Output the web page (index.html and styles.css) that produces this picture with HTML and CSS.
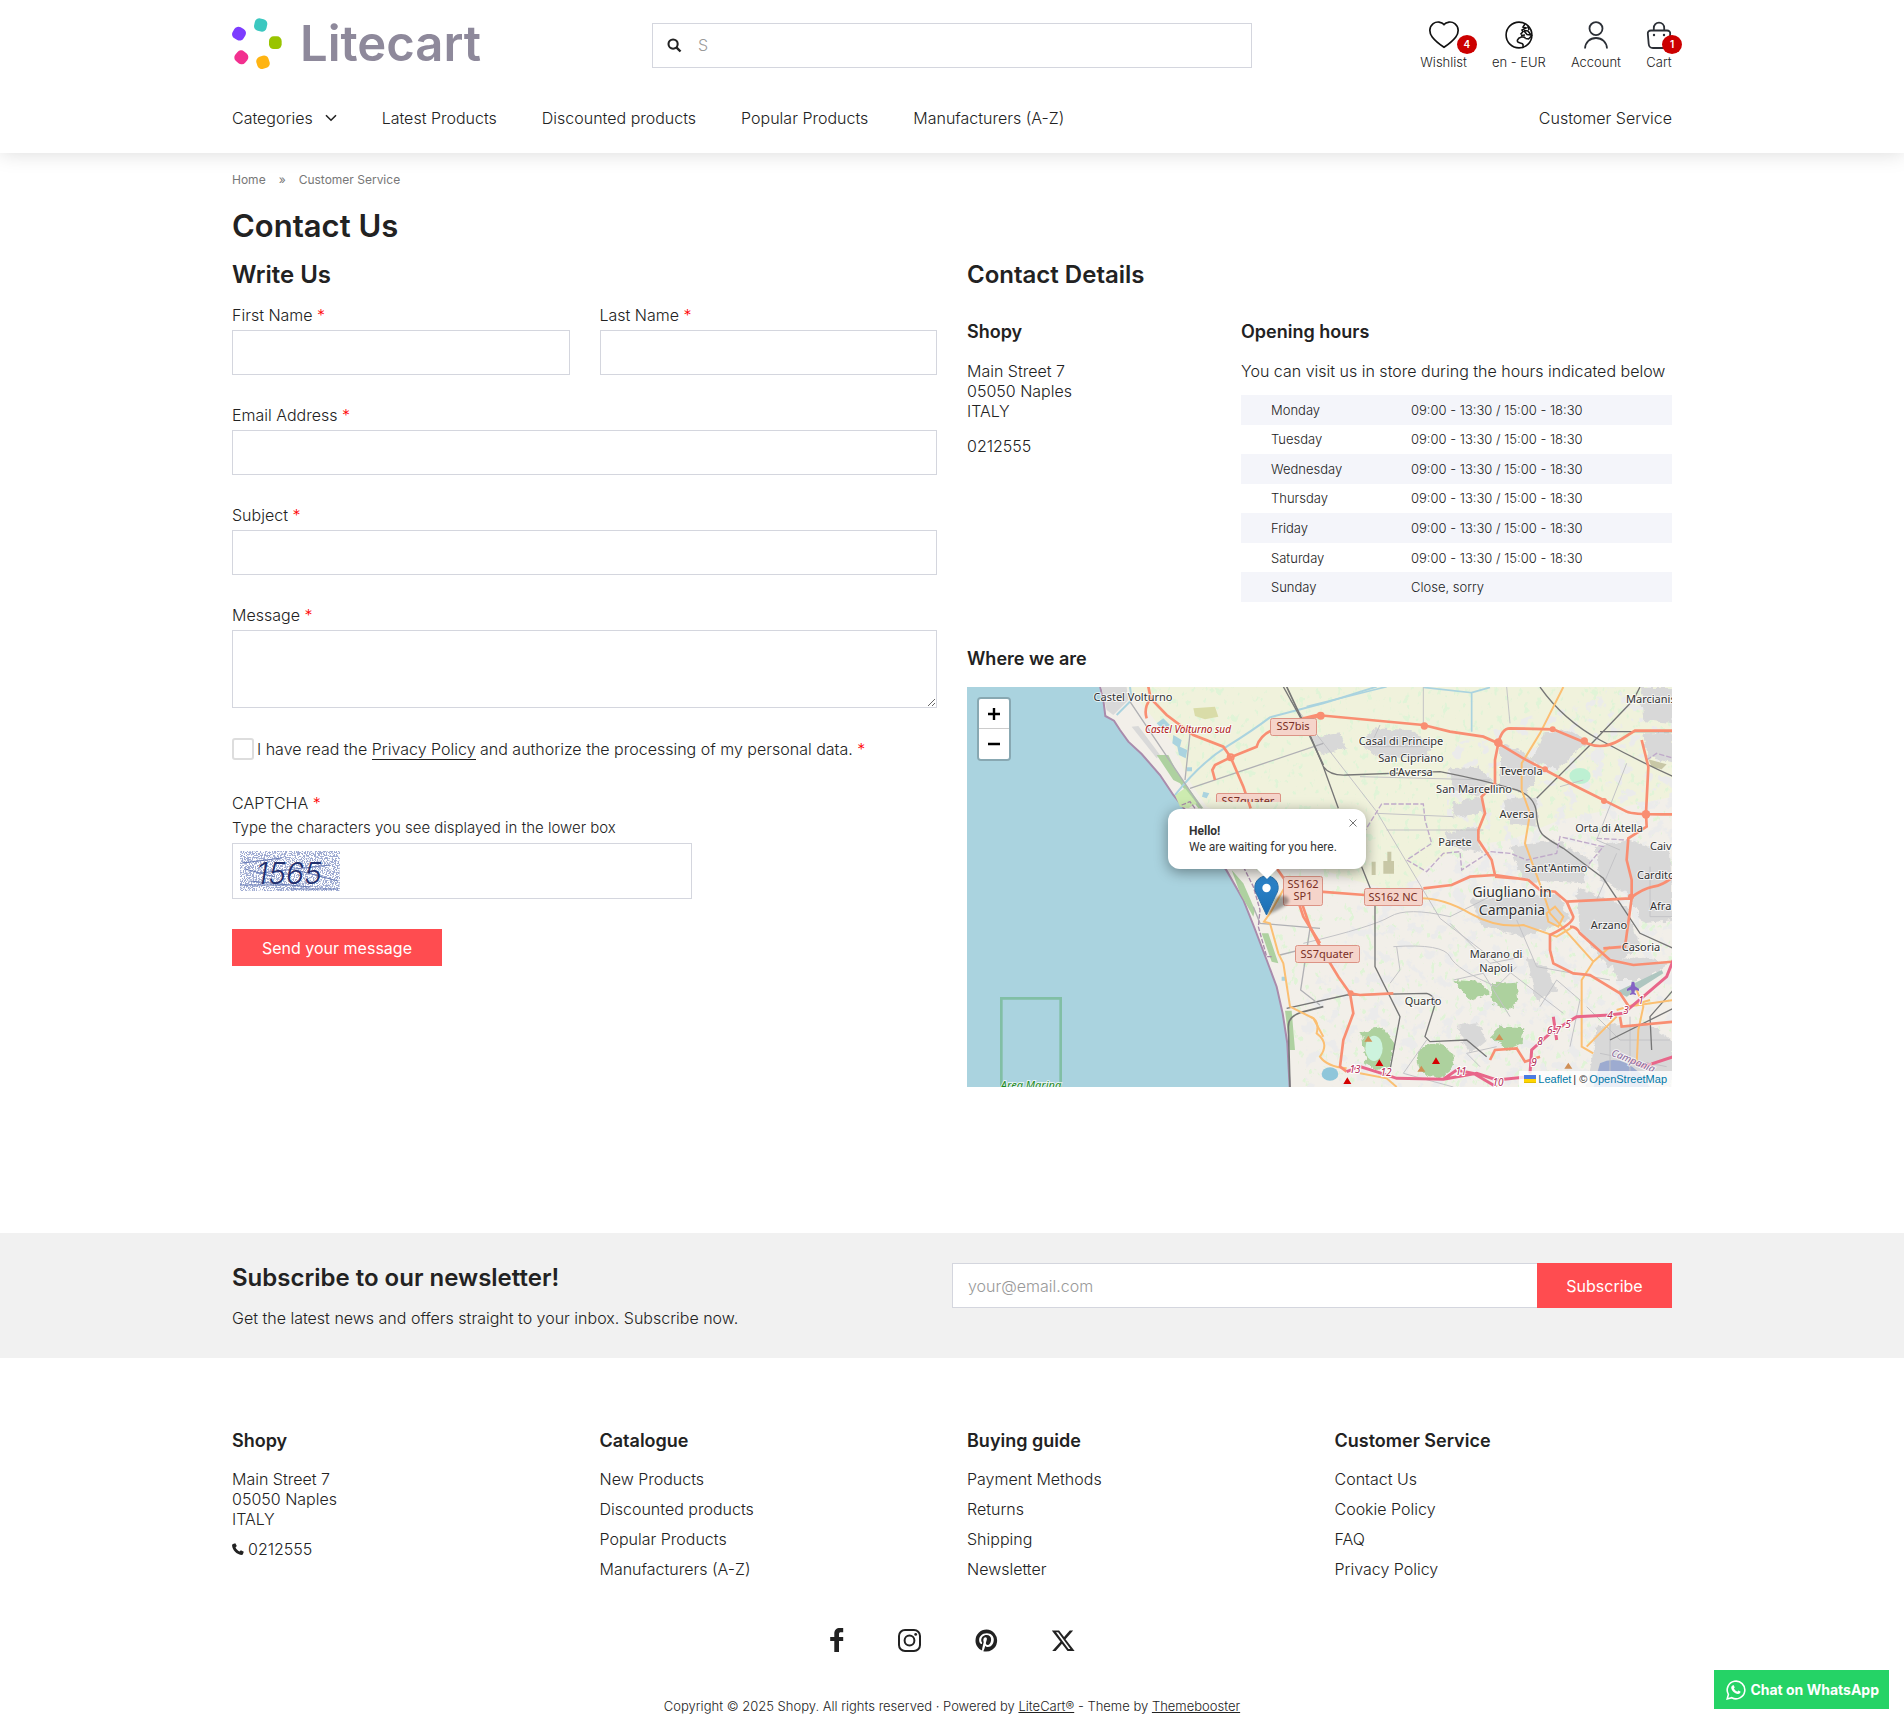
FILE: index.html
```html
<!DOCTYPE html>
<html lang="en">
<head>
<meta charset="utf-8">
<meta name="viewport" content="width=device-width, initial-scale=1">
<title>Contact Us | Shopy</title>
<link rel="stylesheet" href="styles.css">
</head>
<body>

<header class="site-header">
  <div class="container header-top">
    <a class="logo" href="#" aria-label="Litecart">
      <svg class="logo-mark" viewBox="0 0 150 156" aria-hidden="true">
        <rect x="67" y="2" width="38" height="38" rx="14" fill="#3cc8c0" transform="rotate(12 86 21)"/>
        <rect x="2" y="28" width="38" height="38" rx="14" fill="#7d3cff" transform="rotate(30 21 47)"/>
        <rect x="111" y="55" width="38" height="38" rx="14" fill="#99c400"/>
        <rect x="9" y="99" width="38" height="38" rx="14" fill="#f2308f" transform="rotate(40 28 118)"/>
        <rect x="74" y="114" width="38" height="38" rx="14" fill="#ffb412" transform="rotate(-18 93 133)"/>
      </svg>
      <span class="logo-text">Litecart</span>
    </a>
    <form class="search" role="search">
      <svg class="search-icon" viewBox="0 0 16 16" aria-hidden="true"><circle cx="6.5" cy="6.5" r="4.9" fill="none" stroke="currentColor" stroke-width="2.2"/><path d="M10 10l4.4 4.4" stroke="currentColor" stroke-width="2.6"/></svg>
      <input class="search-input" type="search" placeholder="S" aria-label="Search">
    </form>
    <ul class="tools">
      <li><a class="tool" href="#">
        <svg width="30" height="28" viewBox="0 0 30 28" fill="none" stroke="#111" stroke-width="1.7"><path d="M15 3.6C12.8.6 7.500.1 4.200 2.600.1 5.800-.2 11.600 3.200 16c3 3.900 7.300 7.300 11.800 10.300 4.500-3 8.800-6.400 11.800-10.300 3.400-4.400 3.100-10.200-1-13.400C22.500.1 17.200.6 15 3.600z"/></svg>
        <span>Wishlist</span>
        <span class="badge">4</span></a></li>
      <li><a class="tool" href="#">
        <svg width="28" height="28" viewBox="0 0 28 28" fill="none" stroke="#111" stroke-width="1.600"><circle cx="14" cy="14" r="12.900"/><path d="M20 3l-2 3 3 1-4 2 1 1.500-2.500 3M19 9.500l4 .5 3 4-4-.5-3-3.500M23 5l1 4M16 14.500l4-.5M20.500 17.500l3 .5 3-3M20.500 17.500c-1-3-7-1.500-8 1.500-1 4 5 2 5.500 4.500.3 1.500-.5 2.500.5 3.400"/></svg>
        <span>en - EUR</span></a></li>
      <li><a class="tool" href="#">
        <svg width="26" height="28" viewBox="0 0 26 28" fill="none" stroke="#2b2f36" stroke-width="1.800"><circle cx="13" cy="7.600" r="6.500"/><path d="M2 27.500C2.300 21 7 17 13 17s10.700 4 11 10.500"/></svg>
        <span>Account</span></a></li>
      <li><a class="tool" href="#">
        <svg width="26" height="28" viewBox="0 0 26 28" fill="none" stroke="#2b2f36" stroke-width="1.800"><path d="M5 9.500h16c2 0 3.400 1.200 3.200 3.200L23.300 23c-.2 2.500-1.800 4-4.300 4H7c-2.500 0-4.100-1.500-4.300-4l-.9-10.300C1.600 10.700 3 9.500 5 9.500zM7.800 9.500V7c0-3.200 2.300-5.400 5.200-5.400S18.200 3.800 18.200 7v2.500"/><circle cx="8" cy="14" r="1.200" fill="#2b2f36" stroke="none"/><circle cx="18" cy="14" r="1.200" fill="#2b2f36" stroke="none"/></svg>
        <span>Cart</span>
        <span class="badge">1</span></a></li>
    </ul>
  </div>
  <nav class="container main-nav" aria-label="Main">
    <a href="#" class="nav-categories">Categories <svg width="12" height="8" viewBox="0 0 12 8" fill="none" stroke="#222" stroke-width="1.600"><path d="M1 1.200l5 5 5-5"/></svg></a>
    <a href="#">Latest Products</a>
    <a href="#">Discounted products</a>
    <a href="#">Popular Products</a>
    <a href="#">Manufacturers (A-Z)</a>
    <a href="#" class="nav-end">Customer Service</a>
  </nav>
</header>

<main class="container main">
  <nav class="breadcrumbs" aria-label="Breadcrumb">
    <a href="#">Home</a><span>»</span><a href="#">Customer Service</a>
  </nav>
  <h1>Contact Us</h1>
  <div class="columns">
    <section>
      <h2>Write Us</h2>
      <form class="contact-form">
        <div class="row">
          <div class="field">
            <label for="firstname">First Name <span class="req">*</span></label>
            <input class="input" id="firstname" type="text">
          </div>
          <div class="field">
            <label for="lastname">Last Name <span class="req">*</span></label>
            <input class="input" id="lastname" type="text">
          </div>
        </div>
        <div class="field">
          <label for="email">Email Address <span class="req">*</span></label>
          <input class="input" id="email" type="email">
        </div>
        <div class="field">
          <label for="subject">Subject <span class="req">*</span></label>
          <input class="input" id="subject" type="text">
        </div>
        <div class="field">
          <label for="message">Message <span class="req">*</span></label>
          <textarea class="input textarea" id="message"></textarea>
        </div>
        <div class="consent">
          <input class="checkbox" id="consent" type="checkbox">
          <label for="consent">I have read the <a href="#">Privacy Policy</a> and authorize the processing of my personal data. <span class="req">*</span></label>
        </div>
        <div class="field captcha-field">
          <label for="captcha">CAPTCHA <span class="req">*</span></label>
          <span class="hint">Type the characters you see displayed in the lower box</span>
          <div class="captcha">
            <svg class="captcha-image" width="100" height="40" viewBox="0 0 100 40" aria-hidden="true">
              <filter id="speckle" x="0" y="0" width="1" height="1">
                <feTurbulence type="fractalNoise" baseFrequency=".9" numOctaves="2" seed="4"/>
                <feColorMatrix values="0 0 0 0 .34  0 0 0 0 .4  0 0 0 0 .64  12 0 0 0 -5.600"/>
              </filter>
              <rect width="100" height="40" fill="#fff"/>
              <rect width="100" height="40" filter="url(#speckle)"/>
              <g stroke="#6478b4" fill="none"><path d="M2 12l40-5M10 30l60 6M20 22l70-8M50 38h48M5 18l30 8M60 20l38 10M0 34h45"/></g>
              <text class="captcha-code" x="49" y="33" text-anchor="middle">1565</text>
            </svg>
            <input class="captcha-input" id="captcha" type="text">
          </div>
        </div>
        <button class="button send" type="submit">Send your message</button>
      </form>
    </section>

    <section>
      <h2>Contact Details</h2>
      <div class="details">
        <div>
          <h3>Shopy</h3>
          <address>Main Street 7<br>05050 Naples<br>ITALY</address>
          <p class="phone">0212555</p>
        </div>
        <div>
          <h3>Opening hours</h3>
          <p class="hours-note">You can visit us in store during the hours indicated below</p>
          <table class="hours">
            <tbody>
              <tr><td>Monday</td><td>09:00 - 13:30 / 15:00 - 18:30</td></tr>
              <tr><td>Tuesday</td><td>09:00 - 13:30 / 15:00 - 18:30</td></tr>
              <tr><td>Wednesday</td><td>09:00 - 13:30 / 15:00 - 18:30</td></tr>
              <tr><td>Thursday</td><td>09:00 - 13:30 / 15:00 - 18:30</td></tr>
              <tr><td>Friday</td><td>09:00 - 13:30 / 15:00 - 18:30</td></tr>
              <tr><td>Saturday</td><td>09:00 - 13:30 / 15:00 - 18:30</td></tr>
              <tr><td>Sunday</td><td>Close, sorry</td></tr>
            </tbody>
          </table>
        </div>
      </div>
      <h3 class="where">Where we are</h3>
      <div class="map">
        <svg class="map-canvas" viewBox="0 0 705 400" preserveAspectRatio="xMinYMin slice" aria-hidden="true">
          <defs>
            <filter id="fields" x="0" y="0" width="1" height="1">
              <feTurbulence type="fractalNoise" baseFrequency=".16 .11" numOctaves="3" seed="8"/>
              <feColorMatrix values="0 0 0 0 .75  0 0 0 0 .9  0 0 0 0 .68  12 0 0 0 -7.600"/>
              <feComposite in2="SourceGraphic" operator="in"/>
            </filter>
            <filter id="villages" x="0" y="0" width="1" height="1">
              <feTurbulence type="fractalNoise" baseFrequency=".08" numOctaves="4" seed="21"/>
              <feColorMatrix values="0 0 0 0 .83  0 0 0 0 .83  0 0 0 0 .83  12 0 0 0 -6.800"/>
              <feComposite in2="SourceGraphic" operator="in"/>
            </filter>
            <filter id="ragged" x="-.1" y="-.1" width="1.200" height="1.200">
              <feTurbulence type="fractalNoise" baseFrequency=".05" numOctaves="3" seed="3"/>
              <feDisplacementMap in="SourceGraphic" scale="22" xChannelSelector="R" yChannelSelector="G"/>
            </filter>
          </defs>
          <rect width="705" height="400" fill="#aad3df"/>
          <!-- land -->
          <g transform="scale(.33333) translate(-21 -21)">
            <path fill="#f2efe9" stroke="#a98bac" stroke-width="6" d="M418 10L430 60 436 108 462 122 480 150 505 185 545 222 600 285 640 345 672 385 740 490 800 572 850 660 880 735 920 840 950 920 968 1000 982 1090 990 1240H2160V10z"/>
            <path fill="#f0f2dc" d="M500 20L560 90 640 190 680 290 740 380 850 420 900 560 1060 560 1180 600 1330 640 1400 560 1500 500 1650 480 1800 420 2136 350V20z"/>
          </g>
          <path filter="url(#fields)" fill="#000" d="M170 0L235 110 290 185 320 300 335 400H705V0z"/>
          <path filter="url(#villages)" fill="#000" d="M480 60L640 0H705V400H340L330 330 400 200 480 190z"/>
          <!-- woods, beaches and lakes -->
          <g transform="scale(.33333) translate(-21 -21)">
            <path fill="#d9d9d9" d="M424 21H500L505 60 460 105 440 90zM515 140L535 138 600 225 590 235z"/>
            <path fill="#aed1a0" d="M590 225L625 225 650 275 730 385 715 385 660 310 640 300zM815 570L850 610 885 690 880 710 840 640zM905 760L925 760 955 850 935 845zM975 992L995 992 1005 1110 990 1110z"/>
            <path fill="#cdebb0" d="M645 345L675 325 710 370 685 385 660 380z"/>
            <path fill="#aad3df" d="M590 130l20-15 20 20-15 10-15-5zM640 165l25 15-5 20 22 10-5 25-20-10-5-25-15-10zM680 262h16v12h-16zM730 335l18 5-8 15-14-5zM965 890h10v12h-10z"/>
            <path fill="#d9dca8" d="M700 85l65-5 10 30-40 8-30-10z"/>
            <path fill="none" stroke="#aad3df" stroke-width="6" d="M645 345Q720 250 800 200T930 112L1090 70 1250 20M470 105L515 60 510 20"/>
            <path fill="none" stroke="#81bfa5" stroke-width="8" d="M124 1240V955H302V1240"/>
          </g>
          <!-- towns east of the coast -->
          <g transform="scale(.33333) translate(1029 -21)">
            <path fill="none" stroke="#aad3df" stroke-width="5" d="M-10 80L190 30 230 20M340 22L485 38V155M485 38L540 22"/>
            <g fill="#d8d8d8" filter="url(#ragged)">
              <path d="M190 145L300 150 370 190 350 230 210 235 160 200zM0 170L90 160 110 205 30 225zM420 265L500 260 550 300 500 350 430 330zM570 190L640 215 690 260 650 340 570 320zM700 160L770 150 835 185 740 270 665 240zM1000 160H1090V250L1010 230zM990 21H1090V130L1000 120zM430 370L510 350 530 400 430 410zM580 360L680 350 680 440 600 430zM410 460L500 440 520 520 420 500zM600 500L740 480 840 540 820 610 640 600zM860 500L960 480 1080 520 1090 720 1000 730 950 640 870 600zM480 660L740 640 780 720 640 770 520 740zM800 620L950 680 990 800 900 860 810 760zM440 1040L500 1030 530 1080 480 1120zM900 840L1000 830 1080 850 1000 900 920 900zM650 830L710 860 740 930 680 960zM860 1040L1010 1030 1086 1080V1221H830L850 1120z"/>
            </g>
            <g fill="#add19e" filter="url(#ragged)">
              <path d="M150 1055L215 1040 250 1090 240 1160 200 1170 170 1150zM545 910L620 905 625 970 590 990 550 970zM430 900L510 905 540 940 480 960zM540 1070L570 1040 640 1045 635 1090 590 1110z"/>
              <ellipse cx="377" cy="1140" rx="54" ry="50"/>
            </g>
            <ellipse cx="192" cy="1105" rx="26" ry="38" fill="#cdf3dd"/>
            <ellipse cx="810" cy="288" rx="32" ry="24" fill="#bdf0d2"/>
            <ellipse cx="60" cy="1182" rx="25" ry="20" fill="#8fc6da"/>
            <path fill="#b7b58e" opacity=".7" d="M220 543h32v38h-32zM232 515h12v30h-12zM185 545h12v40h-12zM1015 238l55 15-15 15-30-8z"/>
            <path fill="#aec6c0" d="M920 935L1055 870 1060 880 950 950z"/>
            <path fill="#9dabd0" d="M870 1150Q930 1120 990 1180L1020 1221H850z"/>
            <g fill="none" stroke="#c3c3c6" stroke-width="3">
              <path d="M-60 60L200 395 390 715 760 1000M340 21V145M210 135L180 200H340M150 290L540 300M200 400L430 410M230 450H520M-20 790Q190 740 240 710T420 710L560 640M250 800Q400 790 420 830T560 920L620 860M260 800L270 870 240 910M690 980L740 900 810 960 780 1100M420 730L540 850 640 830M590 21L600 130M920 520L860 660M950 250L860 480 930 510M350 1080L280 1180 430 1221M560 1100L470 1120 510 1160M830 980L930 1080M1020 560V710H1090M750 320L820 300M620 720L680 860 900 900M430 900L520 880 600 1010M930 1080H1080M900 1030V1180M960 1010V1200M870 1120L1070 1160"/>
            </g>
            <g fill="none" stroke="#767676" stroke-width="4">
              <path d="M-80 20L0 165 40 260Q60 288 110 285L390 275Q520 300 620 330 680 350 680 410C685 460 690 465 760 505L880 595 990 760 1090 805M690 21Q760 120 870 180T1090 290M990 21L970 60 850 185 680 355M870 155H1090M40 260L85 385M155 560L195 660V860L270 1010 240 1170"/>
              <path d="M-70 985L110 945 350 940Q385 950 370 990L345 1070 360 1085 470 1080 530 1130M1090 930L1020 1010 1025 1110M1090 985L900 1080"/>
            </g>
            <path fill="none" stroke="#bfa9c9" stroke-width="4" stroke-dasharray="16 6" d="M160 460L215 372H340L345 420 365 490 290 540 350 575 400 520 450 515 455 570 540 515 600 520 650 540 740 520 750 470 880 500 830 560M1010 240L1040 220 1090 235M860 475L950 480"/>
            <g fill="none" stroke="#fbbf72" stroke-width="6">
              <path d="M760 21L690 160 635 250V330L660 400 645 490 700 640 720 700 850 845 815 900V990L815 1100 850 1120M335 655Q400 655 480 700T640 735L740 770 790 740M710 700l25-20 25 30-15 30-30-15zM850 845L900 800M920 1010L830 1100M920 990L1020 960M980 930L1000 980 985 1050 980 1150M950 980L1090 960M0 1010Q30 1020 20 1060 60 1090 30 1130 50 1160 110 1165M150 1180L230 1195 260 1221"/>
            </g>
            <g fill="none" stroke="#f98e72" stroke-width="8">
              <path d="M-60 125L20 105 340 135 420 155 520 170 565 190Q575 145 600 145L730 148 830 190Q880 210 930 180L975 152H1090M565 190L640 235 790 315 950 395Q970 405 1090 403M565 190L555 240V310L515 350 525 400 505 450V480L545 540 555 585 655 600 690 630 735 635 770 665 960 655Q1000 625 1030 620T1090 590M555 585L480 590 425 615 340 625M165 645L30 635M965 655L945 800 880 805M555 590L620 595M1008 400L1010 440 955 475 950 540 965 600V650M1008 400L1015 260 995 180"/>
              <path d="M770 665L790 710Q790 730 720 765L720 810 730 850 790 880 840 885 930 940 960 985M780 740Q800 740 810 760L900 840 970 855 1090 845M-45 610L0 740 30 800 85 890 120 940 150 945 250 940M120 940L130 1000 100 1080 90 1160 110 1175M930 1010L935 1040 1090 1025M540 1140L555 1110 620 1105 645 1145 690 1130"/>
            </g>
            <g fill="#f98e72">
              <circle cx="32" cy="107" r="12"/><circle cx="343" cy="138" r="11"/><circle cx="565" cy="188" r="13"/><circle cx="728" cy="148" r="9"/><circle cx="823" cy="183" r="11"/><circle cx="705" cy="268" r="9"/><circle cx="882" cy="363" r="9"/><circle cx="1008" cy="403" r="13"/><circle cx="963" cy="650" r="9"/><circle cx="122" cy="940" r="9"/>
            </g>
            <path fill="none" stroke="#e8668a" stroke-width="9" d="M110 1175L150 1160 215 1180 260 1195 400 1198 440 1170 490 1180 560 1221M400 1198L500 1180 560 1200 660 1190M660 1180L665 1110 720 1060 800 1010 900 1005 940 1000 1000 950 1070 890 1090 840M730 1010L740 1080M1090 1130L1000 1160 960 1140"/>
            <g fill="#d40000"><path d="M196 1158l12-20 12 20zM366 1152l12-20 12 20zM100 1212l12-20 12 20z"/></g>
            <g fill="#d08f55"><path d="M163 1085l12-18 12 18zM322 1175l12-18 12 18zM556 1080l12-18 12 18zM763 1166l12-18 12 18z"/></g>
            <path fill="#8461c4" d="M965 905h8l2 14 12 8v6l-12-4-2 8 5 5v3l-9-2-9 2v-3l5-5-2-8-12 4v-6l12-8z"/>
          </g>
          <!-- west coast roads -->
          <g transform="scale(.33333) translate(-21 -21)" fill="none">
            <path stroke="#b0b0b4" stroke-width="4" d="M510 65L725 385M690 325L1090 190M690 160L675 300M880 680L900 730 1080 745M960 825L1060 800M1050 745L1022 930 1080 975"/>
            <path stroke="#767676" stroke-width="5" d="M980 20L1090 255M990 1221L985 1040Q985 1010 1020 998L1090 980"/>
            <path stroke="#f98e72" stroke-width="8" d="M565 20L572 55 620 105 700 165 790 200 812 232 850 320 872 385M572 55Q550 85 560 115M812 232L890 200Q900 160 960 140L1090 105M812 232L765 255 757 270 765 300M950 565L1010 650 1030 710 1080 790"/>
            <circle cx="812" cy="232" r="9" stroke="#f98e72" stroke-width="6"/>
            <path stroke="#fbbf72" stroke-width="6" d="M975 620L930 700 912 725 930 730 955 820 970 850 990 980 1060 1015 1090 1070"/>
            <path stroke="#a98bac" stroke-width="4" stroke-dasharray="14 5" d="M665 375L690 365 705 385M850 560L880 620 900 690 895 740 920 830H935"/>
          </g>
          <!-- road shields -->
          <g fill="#f5d4ca" stroke="#dc9385">
            <rect x="303.500" y="31.500" width="46" height="17" rx="2"/>
            <path d="M249.500 115v-7q0-1.500 1.500-1.500h61q1.500 0 1.500 1.500v7"/>
            <rect x="316.500" y="189.500" width="39" height="29" rx="2"/>
            <rect x="397.500" y="201.500" width="58" height="17" rx="2"/>
            <rect x="328.500" y="258.500" width="64" height="17" rx="2"/>
          </g>
          <clipPath id="tile"><path d="M240 100h90v15h-90z"/></clipPath>
          <g class="map-shield">
            <text x="326" y="43">SS7bis</text>
            <text x="281" y="118" clip-path="url(#tile)">SS7quater</text>
            <text x="336" y="201">SS162</text><text x="336" y="213">SP1</text>
            <text x="426" y="214">SS162 NC</text><text x="360" y="271">SS7quater</text>
          </g>
          <g class="map-town">
            <text x="166" y="14">Castel Volturno</text>
            <text x="434" y="58">Casal di Principe</text>
            <text x="444" y="75">San Cipriano</text><text x="444" y="89">d'Aversa</text>
            <text x="554" y="88">Teverola</text><text x="507" y="106">San Marcellino</text>
            <text x="550" y="131">Aversa</text><text x="488" y="159">Parete</text>
            <text x="589" y="185">Sant'Antimo</text><text x="642" y="145">Orta di Atella</text>
            <text x="642" y="242">Arzano</text><text x="674" y="264">Casoria</text>
            <text x="529" y="271">Marano di</text><text x="529" y="285">Napoli</text>
            <text x="456" y="318">Quarto</text>
            <g class="map-start"><text x="659" y="16">Marcianis</text><text x="683" y="163">Caiv</text><text x="670" y="192">Cardito</text><text x="683" y="223">Afra</text></g>
            <g class="map-city"><text x="545" y="210">Giugliano in</text><text x="545" y="228">Campania</text></g>
          </g>
          <g class="map-note">
            <text class="map-red" x="221" y="46">Castel Volturno sud</text>
            <text class="map-green" x="64" y="402">Area Marina</text>
            <text class="map-purple" x="665" y="377" transform="rotate(22 665 377)">Campania</text>
          </g>
          <g class="map-exit">
            <text x="388" y="386">13</text><text x="419" y="389">12</text><text x="494" y="388">11</text><text x="531" y="399">10</text>
            <text x="567" y="379">9</text><text x="573" y="358">8</text><text x="587" y="347">6-7</text><text x="601" y="341">5</text>
            <text x="643" y="332">4</text><text x="659" y="327">3</text><text x="674" y="317">1</text>
          </g>
        </svg>
        <div class="map-zoom">
          <button type="button" aria-label="Zoom in"><svg width="14" height="14" viewBox="0 0 14 14" stroke="#000" stroke-width="2.400"><path d="M7 1v12M1 7h12"/></svg></button>
          <button type="button" aria-label="Zoom out"><svg width="14" height="14" viewBox="0 0 14 14" stroke="#000" stroke-width="2.400"><path d="M1 7h12"/></svg></button>
        </div>
        <svg class="map-marker" width="42" height="42" viewBox="0 0 42 42" aria-hidden="true">
          <defs><linearGradient id="pin" x2="0" y2="1"><stop stop-color="#2e85cb"/><stop offset="1" stop-color="#1c6fb4"/></linearGradient>
          <filter id="soft"><feGaussianBlur stdDeviation="1.500"/></filter></defs>
          <path d="M13 40L22 22Q34 18 35 26 34 31 13 40z" fill="#000" opacity=".35" filter="url(#soft)"/>
          <path d="M12.500 1C6 1 .8 6 .8 12.600c0 3.400 1.400 5.800 3 8.900L12.500 40l8.700-18.500c1.600-3.100 3-5.500 3-8.900C24.200 6 19 1 12.500 1z" fill="url(#pin)" stroke="#2a6fa8"/>
          <circle cx="12.500" cy="13" r="4.200" fill="#fff"/>
        </svg>
        <div class="map-popup">
          <strong>Hello!</strong><br>We are waiting for you here.
          <button class="popup-close" type="button" aria-label="Close popup"><svg width="8" height="8" viewBox="0 0 8 8" stroke="#757575"><path d="M.5.5l7 7M7.500.5l-7 7"/></svg></button>
        </div>
        <div class="map-credit">
          <svg width="12" height="8" viewBox="0 0 12 8" aria-hidden="true"><path fill="#4c7be1" d="M0 0h12v4H0z"/><path fill="#ffd500" d="M0 4h12v3H0z"/><path fill="#e0bc00" d="M0 7h12v1H0z"/></svg>
          <a href="#">Leaflet</a> | © <a href="#">OpenStreetMap</a>
        </div>
      </div>
    </section>
  </div>
</main>

<section class="newsletter">
  <div class="container newsletter-inner">
    <div>
      <h2>Subscribe to our newsletter!</h2>
      <p>Get the latest news and offers straight to your inbox. Subscribe now.</p>
    </div>
    <form class="subscribe">
      <input class="input" type="email" placeholder="your@email.com" aria-label="Email address">
      <button class="button" type="submit">Subscribe</button>
    </form>
  </div>
</section>

<footer class="container footer">
  <div class="footer-columns">
    <div>
      <h3>Shopy</h3>
      <address>Main Street 7<br>05050 Naples<br>ITALY</address>
      <p class="footer-phone"><svg width="12" height="12" viewBox="0 0 12 12" aria-hidden="true"><path fill="#222" d="M3.300.2L1 .9C.3 1.200 0 2 .1 2.800.7 7.500 4.500 11.300 9.200 11.900c.8.1 1.600-.2 1.800-.9l.8-2.300-2.900-1.500-1.400 1.300C5.800 7.700 4.300 6.200 3.500 4.500l1.300-1.400z"/></svg> 0212555</p>
    </div>
    <div>
      <h3>Catalogue</h3>
      <ul>
        <li><a href="#">New Products</a></li>
        <li><a href="#">Discounted products</a></li>
        <li><a href="#">Popular Products</a></li>
        <li><a href="#">Manufacturers (A-Z)</a></li>
      </ul>
    </div>
    <div>
      <h3>Buying guide</h3>
      <ul>
        <li><a href="#">Payment Methods</a></li>
        <li><a href="#">Returns</a></li>
        <li><a href="#">Shipping</a></li>
        <li><a href="#">Newsletter</a></li>
      </ul>
    </div>
    <div>
      <h3>Customer Service</h3>
      <ul>
        <li><a href="#">Contact Us</a></li>
        <li><a href="#">Cookie Policy</a></li>
        <li><a href="#">FAQ</a></li>
        <li><a href="#">Privacy Policy</a></li>
      </ul>
    </div>
  </div>
  <div class="social">
    <a href="#" aria-label="Facebook"><svg width="14" height="24" viewBox="0 0 14 24"><path fill="#222" d="M13.200 0v4.200H11c-1.500 0-2 .6-2 2V9h4.200v4H9v11H4.300V13H.2V9h4.100V5.800C4.300 2 6.500 0 9.800 0z"/></svg></a>
    <a href="#" aria-label="Instagram"><svg width="23" height="23" viewBox="0 0 23 23" fill="none" stroke="#222" stroke-width="2"><rect x="1" y="1" width="21" height="21" rx="6"/><circle cx="11.500" cy="11.500" r="4.900"/><circle cx="17.700" cy="5.400" r="1.400" fill="#222" stroke="none"/></svg></a>
    <a href="#" aria-label="Pinterest"><svg width="23" height="23" viewBox="0 0 24 24"><path fill="#222" d="M12 .5A11.500 11.500 0 0 0 .5 12c0 4.700 2.800 8.700 6.900 10.500 0-.8 0-1.800.2-2.700l1.500-6.300s-.4-.7-.4-1.800c0-1.700 1-3 2.200-3 1 0 1.500.8 1.500 1.700 0 1-.7 2.600-1 4-.3 1.200.6 2.200 1.800 2.200 2.100 0 3.600-2.700 3.600-6 0-2.500-1.700-4.300-4.700-4.300-3.400 0-5.600 2.600-5.600 5.400 0 1 .3 1.700.7 2.200.2.200.3.300.2.600l-.2.900c-.1.300-.3.400-.6.300-1.600-.6-2.300-2.400-2.300-4.300C4.300 8.200 7 4.500 12.400 4.500c4.300 0 7.200 3.100 7.200 6.500 0 4.500-2.500 7.800-6.100 7.800-1.200 0-2.400-.7-2.800-1.400l-.8 3c-.2.900-.8 2-1.300 2.700A11.500 11.500 0 1 0 12 .5z"/></svg></a>
    <a href="#" aria-label="X"><svg width="23" height="23" viewBox="0 0 24 24"><path fill="#222" fill-rule="evenodd" d="M18.500 1.500h3.600l-8 9.100L23.600 23h-7.400l-5.800-7.500L3.800 23H.2l8.600-9.800L-.2 1.500h7.600l5.200 6.900zM17.200 20.900h2L6.400 3.500H4.200z"/></svg></a>
  </div>
  <p class="copyright">Copyright © 2025 Shopy. All rights reserved · Powered by <a href="#">LiteCart®</a> - Theme by <a href="#">Themebooster</a></p>
</footer>

<a class="whatsapp" href="#">
  <svg width="20" height="20" viewBox="0 0 20 20" fill="none" stroke="#fff" aria-hidden="true"><path stroke-width="1.600" d="M1.200 18.900l1.200-4.500A8.800 8.800 0 1 1 5.800 17.700z"/><path fill="#fff" stroke="none" d="M6.900 5.200h.9l.9 2.200-.8 1.200c.8 1.500 1.900 2.500 3.400 3.100l1-1.200 2.200 1c.1 1.500-1 2.500-2.500 2.500-3.600-.5-6.600-3.500-6.800-6.300 0-1.200.7-2.100 1.700-2.500z"/></svg>
  Chat on WhatsApp
</a>

</body>
</html>
```
FILE: styles.css
```css
* { box-sizing: border-box; }

body {
  margin: 0;
  background: #fff;
  color: #222;
  font: 300 16px/20px Inter, "Open Sans", sans-serif;
}

h1, h2, h3, p, ul { margin: 0; padding: 0; }
ul { list-style: none; }
a { color: inherit; text-decoration: none; }
address { font-style: normal; }
svg { display: block; flex: none; }
input, textarea, button { font: inherit; color: inherit; }

h1 { font-size: 31px; line-height: 36px; font-weight: 600; }
h2 { font-size: 24px; line-height: 30px; font-weight: 600; }
h3 { font-size: 18px; line-height: 24px; font-weight: 600; }

.container {
  width: 100%;
  max-width: 1470px;
  margin: 0 auto;
  padding-left: 15px;
  padding-right: 15px;
}

/* Header */
.site-header {
  padding: 15px 0 25px;
  box-shadow: 0 0 20px rgba(0, 0, 0, .15);
}
.header-top {
  display: grid;
  grid-template-columns: 1fr 600px 1fr;
  align-items: center;
  min-height: 60px;
}
.logo { display: flex; align-items: center; gap: 18px; padding-bottom: 2px; }
.logo-mark { width: 50px; height: 52px; }
.logo-text { color: #8e899b; font-size: 49px; line-height: 52px; font-weight: 600; }
.search {
  display: flex;
  align-items: center;
  gap: 16px;
  height: 45px;
  padding: 0 14px;
  border: 1px solid #d4d6de;
}
.search-icon { width: 15px; height: 15px; }
.search-input {
  flex: 1;
  min-width: 0;
  padding: 0;
  border: 0;
  outline: 0;
  background: none;
}
::placeholder { color: #999; opacity: 1; }
.tools { display: flex; justify-content: flex-end; gap: 25px; }
.tool {
  position: relative;
  display: flex;
  flex-direction: column;
  align-items: center;
  gap: 5px;
  font-size: 13px;
  line-height: 16px;
}
.badge {
  position: absolute;
  right: -10px;
  top: 14px;
  width: 20px;
  height: 19px;
  border-radius: 50%;
  background: #c00;
  color: #fff;
  font-size: 10px;
  line-height: 19px;
  font-weight: 600;
  text-align: center;
}
.main-nav { display: flex; gap: 45px; padding-top: 33px; }
.nav-categories { display: flex; align-items: center; gap: 12px; }
.nav-end { margin-left: auto; }

/* Contact page */
.main { padding-bottom: 146px; }
.breadcrumbs {
  display: flex;
  gap: 13px;
  padding: 17px 0 18px;
  color: #777;
  font-size: 12px;
  font-weight: 400;
}
.columns {
  display: grid;
  grid-template-columns: repeat(2, minmax(0, 1fr));
  gap: 30px;
  margin-top: 16px;
}
.contact-form { display: flex; flex-direction: column; gap: 30px; margin-top: 15px; }
.row { display: grid; grid-template-columns: 1fr 1fr; gap: 30px; }
.field { display: flex; flex-direction: column; gap: 5px; }
.req { color: #f00; }
.input {
  width: 100%;
  height: 45px;
  padding: 0 15px;
  border: 1px solid #d4d6de;
  border-radius: 0;
  background: #fff;
}
.textarea { display: block; height: 78px; resize: vertical; }
.consent { display: flex; align-items: center; gap: 3px; }
.consent a { border-bottom: 1px solid #222; }
.checkbox {
  appearance: none;
  flex: none;
  width: 22px;
  height: 22px;
  margin: 0;
  border: 2px solid #ddd;
  border-radius: 3px;
}
.captcha-field { padding-top: 3px; }
.hint { font-size: 15px; }
.captcha {
  display: flex;
  align-items: center;
  gap: 10px;
  width: 460px;
  max-width: 100%;
  height: 56px;
  padding: 0 7px;
  border: 1px solid #d4d6de;
}
.captcha-input { flex: 1; min-width: 0; height: 40px; padding: 0; border: 0; outline: 0; }
.captcha-code { fill: #1f2f6e; font: italic 300 30px Inter, sans-serif; }
.button {
  border: 0;
  background: #ff4c50;
  color: #fff;
  font-weight: 400;
  cursor: pointer;
}
.send { align-self: flex-start; height: 37px; padding: 0 30px; }

.details {
  display: grid;
  grid-template-columns: 244fr 431fr;
  gap: 30px;
  margin-top: 30px;
}
.details address, .hours-note { margin-top: 17px; }
.hours-note { white-space: nowrap; }
.phone { margin-top: 15px; }
.hours {
  width: 100%;
  height: 207px;
  margin-top: 14px;
  border-collapse: collapse;
  font-size: 13px;
  line-height: 18px;
}
.hours td { padding: 4px 0; }
.hours td:first-child { width: 170px; padding-left: 30px; }
.hours tr:nth-child(odd) { background: #f4f5fa; }
.where { margin-top: 45px; }

/* Map */
.map { position: relative; height: 400px; margin-top: 16px; overflow: hidden; }
.map-canvas { width: 100%; height: 100%; }
.map-canvas text { font-family: "Noto Sans", sans-serif; font-size: 11px; font-weight: 400; text-anchor: middle; }
.map-town { fill: #333; stroke: #fff; stroke-width: 2px; stroke-opacity: .7; paint-order: stroke; }
.map-canvas .map-start text { text-anchor: start; }
.map-canvas .map-city text { font-size: 14px; }
.map-shield { fill: #7a2e24; }
.map-canvas .map-note text { font-size: 10px; font-style: italic; paint-order: stroke; stroke: #fff; stroke-width: 2px; stroke-opacity: .7; }
.map-red { fill: #b01515; }
.map-canvas .map-note .map-green { fill: #1e8a1e; font-size: 11px; }
.map-purple { fill: #8b6a9c; }
.map-canvas .map-exit text { font-size: 10px; font-style: italic; }
.map-exit { fill: #b02a55; stroke: #fff; stroke-width: 2px; paint-order: stroke; }
.map-zoom {
  position: absolute;
  left: 10px;
  top: 10px;
  border: 2px solid rgba(0, 0, 0, .2);
  background-clip: padding-box;
  border-radius: 4px;
  overflow: hidden;
}
.map-zoom button {
  display: grid;
  place-items: center;
  width: 30px;
  height: 30px;
  padding: 0;
  border: 0;
  background: #fff;
}
.map-zoom button:first-child { border-bottom: 1px solid #ccc; }
.map-marker { position: absolute; left: 287px; top: 188px; }
.map-popup {
  position: absolute;
  left: 201px;
  top: 122px;
  width: 198px;
  padding: 14px 21px;
  border-radius: 12px;
  background: #fff;
  box-shadow: 0 3px 14px rgba(0, 0, 0, .4);
  color: #333;
  font: 400 12px/16px Roboto, sans-serif;
  white-space: nowrap;
}
.map-popup::after {
  content: "";
  position: absolute;
  left: 50%;
  top: 100%;
  margin-left: -10px;
  border: 10px solid transparent;
  border-top-color: #fff;
  border-bottom: 0;
}
.popup-close { position: absolute; right: 9px; top: 10px; padding: 0; border: 0; background: none; }
.map-credit {
  position: absolute;
  right: 0;
  bottom: 0;
  display: flex;
  align-items: center;
  gap: 2px;
  padding: 0 5px;
  background: rgba(255, 255, 255, .8);
  color: #333;
  font: 400 11px/16px "Liberation Sans", sans-serif;
}
.map-credit a { color: #0078a8; }

/* Newsletter */
.newsletter { padding: 30px 0; background: #f1f1f1; }
.newsletter-inner { display: grid; grid-template-columns: 1fr 1fr; align-items: start; }
.newsletter p { margin-top: 15px; }
.subscribe { display: flex; }
.subscribe .input { flex: 1; min-width: 0; border-right: 0; }
.subscribe .button { width: 135px; height: 45px; padding: 0; }

/* Footer */
.footer { padding-top: 71px; padding-bottom: 7px; }
.footer-columns { display: grid; grid-template-columns: repeat(4, 1fr); gap: 30px; }
.footer address, .footer ul { margin-top: 16px; }
.footer ul { display: flex; flex-direction: column; gap: 10px; }
.footer-phone { display: flex; align-items: center; gap: 4px; margin-top: 10px; }
.social { display: flex; justify-content: center; align-items: center; gap: 54px; margin-top: 49px; }
.copyright { margin-top: 44px; font-size: 13px; text-align: center; }
.copyright a { text-decoration: underline; }

.whatsapp {
  position: fixed;
  right: 15px;
  bottom: 15px;
  display: flex;
  align-items: center;
  gap: 4px;
  height: 39px;
  padding: 0 10px 0 12px;
  background: #25d366;
  color: #fff;
  font-size: 14px;
  font-weight: 700;
}
```
